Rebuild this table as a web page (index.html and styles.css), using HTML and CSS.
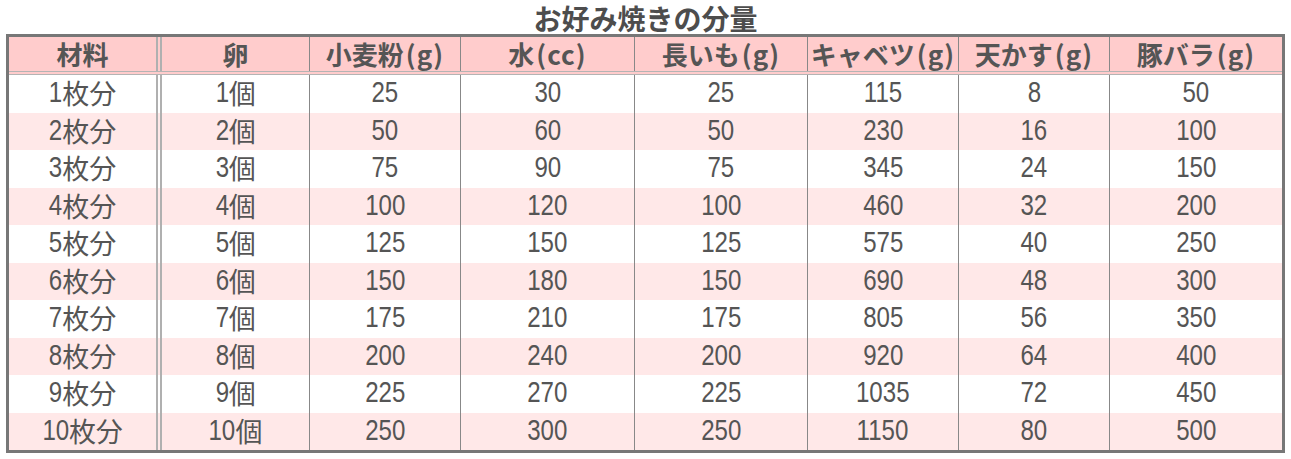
FILE: index.html
```html
<!DOCTYPE html>
<html lang="ja">
<head>
<meta charset="utf-8">
<title>お好み焼きの分量</title>
<link rel="stylesheet" href="styles.css">
</head>
<body>
<div class="page">
  <h1 class="title">お好み焼きの分量</h1>
  <div class="table">
    <div class="row head">
      <div class="cell first">材料</div>
      <div class="cell">卵</div>
      <div class="cell">小麦粉<span class="unit">(g)</span></div>
      <div class="cell">水<span class="unit">(cc)</span></div>
      <div class="cell">長いも<span class="unit">(g)</span></div>
      <div class="cell">キャベツ<span class="unit">(g)</span></div>
      <div class="cell">天かす<span class="unit">(g)</span></div>
      <div class="cell last">豚バラ<span class="unit">(g)</span></div>
    </div>
    <div class="row odd"><div class="cell first"><span class="n d1">1</span>枚分</div><div class="cell"><span class="n d1">1</span>個</div><div class="cell"><span class="n d2">25</span></div><div class="cell"><span class="n d2">30</span></div><div class="cell"><span class="n d2">25</span></div><div class="cell"><span class="n d3">115</span></div><div class="cell"><span class="n d1">8</span></div><div class="cell last"><span class="n d2">50</span></div></div>
    <div class="row even"><div class="cell first"><span class="n d1">2</span>枚分</div><div class="cell"><span class="n d1">2</span>個</div><div class="cell"><span class="n d2">50</span></div><div class="cell"><span class="n d2">60</span></div><div class="cell"><span class="n d2">50</span></div><div class="cell"><span class="n d3">230</span></div><div class="cell"><span class="n d2">16</span></div><div class="cell last"><span class="n d3">100</span></div></div>
    <div class="row odd"><div class="cell first"><span class="n d1">3</span>枚分</div><div class="cell"><span class="n d1">3</span>個</div><div class="cell"><span class="n d2">75</span></div><div class="cell"><span class="n d2">90</span></div><div class="cell"><span class="n d2">75</span></div><div class="cell"><span class="n d3">345</span></div><div class="cell"><span class="n d2">24</span></div><div class="cell last"><span class="n d3">150</span></div></div>
    <div class="row even"><div class="cell first"><span class="n d1">4</span>枚分</div><div class="cell"><span class="n d1">4</span>個</div><div class="cell"><span class="n d3">100</span></div><div class="cell"><span class="n d3">120</span></div><div class="cell"><span class="n d3">100</span></div><div class="cell"><span class="n d3">460</span></div><div class="cell"><span class="n d2">32</span></div><div class="cell last"><span class="n d3">200</span></div></div>
    <div class="row odd"><div class="cell first"><span class="n d1">5</span>枚分</div><div class="cell"><span class="n d1">5</span>個</div><div class="cell"><span class="n d3">125</span></div><div class="cell"><span class="n d3">150</span></div><div class="cell"><span class="n d3">125</span></div><div class="cell"><span class="n d3">575</span></div><div class="cell"><span class="n d2">40</span></div><div class="cell last"><span class="n d3">250</span></div></div>
    <div class="row even"><div class="cell first"><span class="n d1">6</span>枚分</div><div class="cell"><span class="n d1">6</span>個</div><div class="cell"><span class="n d3">150</span></div><div class="cell"><span class="n d3">180</span></div><div class="cell"><span class="n d3">150</span></div><div class="cell"><span class="n d3">690</span></div><div class="cell"><span class="n d2">48</span></div><div class="cell last"><span class="n d3">300</span></div></div>
    <div class="row odd"><div class="cell first"><span class="n d1">7</span>枚分</div><div class="cell"><span class="n d1">7</span>個</div><div class="cell"><span class="n d3">175</span></div><div class="cell"><span class="n d3">210</span></div><div class="cell"><span class="n d3">175</span></div><div class="cell"><span class="n d3">805</span></div><div class="cell"><span class="n d2">56</span></div><div class="cell last"><span class="n d3">350</span></div></div>
    <div class="row even"><div class="cell first"><span class="n d1">8</span>枚分</div><div class="cell"><span class="n d1">8</span>個</div><div class="cell"><span class="n d3">200</span></div><div class="cell"><span class="n d3">240</span></div><div class="cell"><span class="n d3">200</span></div><div class="cell"><span class="n d3">920</span></div><div class="cell"><span class="n d2">64</span></div><div class="cell last"><span class="n d3">400</span></div></div>
    <div class="row odd"><div class="cell first"><span class="n d1">9</span>枚分</div><div class="cell"><span class="n d1">9</span>個</div><div class="cell"><span class="n d3">225</span></div><div class="cell"><span class="n d3">270</span></div><div class="cell"><span class="n d3">225</span></div><div class="cell"><span class="n d4">1035</span></div><div class="cell"><span class="n d2">72</span></div><div class="cell last"><span class="n d3">450</span></div></div>
    <div class="row even"><div class="cell first"><span class="n d2">10</span>枚分</div><div class="cell"><span class="n d2">10</span>個</div><div class="cell"><span class="n d3">250</span></div><div class="cell"><span class="n d3">300</span></div><div class="cell"><span class="n d3">250</span></div><div class="cell"><span class="n d4">1150</span></div><div class="cell"><span class="n d2">80</span></div><div class="cell last"><span class="n d3">500</span></div></div>
  </div>
</div>
</body>
</html>
```
FILE: styles.css
```css
html, body {
  margin: 0;
  padding: 0;
  background: #ffffff;
}

.page {
  width: 1291px;
  padding-left: 6px;
  box-sizing: border-box;
  color: #555555;
}

.title {
  margin: 0;
  width: 1279px;
  height: 34px;
  line-height: 36px;
  text-align: center;
  font-family: "Noto Sans CJK JP", sans-serif;
  font-weight: bold;
  font-size: 28px;
  color: #4d4d4d;
}

.table {
  width: 1279px;
  border: 3px solid #777777;
  box-sizing: border-box;
  display: flex;
  flex-direction: column;
}

.row {
  display: grid;
  grid-template-columns: 153px 148px 151px 174px 173px 151px 151px 172px;
  height: 37.5px;
}

.row.head {
  height: 38px;
  background: #ffcccc;
  border-bottom: 4px double #b4b4b4;
  box-sizing: border-box;
}

.row.odd { background: #ffffff; }
.row.even { background: #ffe8e8; }

.cell {
  display: flex;
  align-items: center;
  justify-content: center;
  border-right: 1px solid #888888;
  box-sizing: border-box;
  font-family: "Noto Sans CJK JP", sans-serif;
  font-size: 27px;
  line-height: 1;
  white-space: nowrap;
  padding-bottom: 2px;
}

.cell.first {
  border-right: 6px double #b0b0b0;
}

.cell.last {
  border-right: none;
}

.n {
  display: inline-block;
  font-family: "Liberation Sans", Arial, sans-serif;
  font-size: 29px;
  line-height: 1;
  transform: scaleX(0.83);
  transform-origin: right center;
}

.n.d1 { margin-left: -2.7px; }
.n.d2 { margin-left: -5.5px; }
.n.d3 { margin-left: -8.2px; }
.n.d4 { margin-left: -11px; }

.head .cell {
  font-weight: bold;
  font-size: 26px;
  padding-top: 1px;
  padding-bottom: 2px;
}

.unit {
  margin-left: 2px;
  letter-spacing: 1px;
}
```
